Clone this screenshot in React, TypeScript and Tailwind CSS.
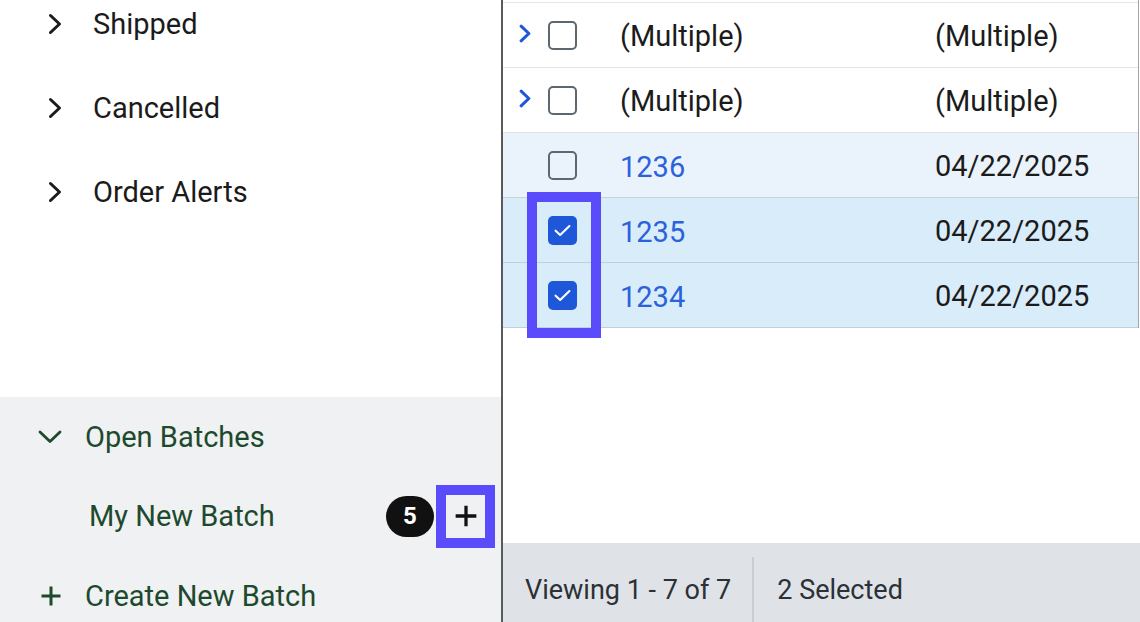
import React from "react";

type Row = {
  kind: "group" | "order";
  id: string;
  date: string;
  checked?: boolean;
  bg: string;
  line: string;
};

const rows: Row[] = [
  { kind: "group", id: "(Multiple)", date: "(Multiple)", bg: "bg-white", line: "border-[#e1e6eb]" },
  { kind: "group", id: "(Multiple)", date: "(Multiple)", bg: "bg-white", line: "border-[#dfe4e9]" },
  { kind: "order", id: "1236", date: "04/22/2025", bg: "bg-[#eaf3fb]", line: "border-[#c7d2db]" },
  { kind: "order", id: "1235", date: "04/22/2025", checked: true, bg: "bg-[#d8ecf9]", line: "border-[#c2ced8]" },
  { kind: "order", id: "1234", date: "04/22/2025", checked: true, bg: "bg-[#d8ecf9]", line: "border-[#c2ced8]" },
];

function ChevronRight({ className, width = 3 }: { className?: string; width?: number }) {
  return (
    <svg viewBox="0 0 14 22" className={className} fill="none">
      <path d="M2.5 2.5 L11.5 11 L2.5 19.5" stroke="currentColor" strokeWidth={width} strokeLinecap="round" strokeLinejoin="round" />
    </svg>
  );
}

function ChevronDown({ className }: { className?: string }) {
  return (
    <svg viewBox="0 0 24 14" className={className} fill="none">
      <path d="M2 2 L12 11.5 L22 2" stroke="currentColor" strokeWidth="2.8" strokeLinecap="round" strokeLinejoin="round" />
    </svg>
  );
}

function Plus({ className }: { className?: string }) {
  return (
    <svg viewBox="0 0 22 22" className={className} fill="none">
      <path d="M11 1.5 V20.5 M1.5 11 H20.5" stroke="currentColor" strokeWidth="3" />
    </svg>
  );
}

function Checkbox({ checked }: { checked?: boolean }) {
  if (checked) {
    return (
      <div className="w-[29px] h-[29px] rounded-[5px] bg-[#1f57d9] flex items-center justify-center">
        <svg viewBox="0 0 16 12" className="w-[17px] h-[13px]" fill="none">
          <path d="M1.5 6.2 L5.8 10.2 L14.5 1.8" stroke="white" strokeWidth="2" strokeLinecap="round" strokeLinejoin="round" />
        </svg>
      </div>
    );
  }
  return <div className="w-[29px] h-[29px] rounded-[5px] border-2 border-[#5d6770] bg-transparent" />;
}

export default function App() {
  return (
    <div
      className="w-[1140px] h-[622px] overflow-hidden flex bg-white text-[#1b1b1b]"
      style={{ fontFamily: "Roboto, 'Liberation Sans', sans-serif" }}
    >
      {/* sidebar */}
      <div className="w-[503px] shrink-0 flex flex-col border-r-2 border-[#5a5a5a]">
        <div className="flex-1 -mt-[18px]">
          {["Shipped", "Cancelled", "Order Alerts"].map((label) => (
            <div key={label} className="h-[84px] flex items-center">
              <ChevronRight className="w-[14px] h-[22px] ml-[48px] text-[#1b1b1b]" />
              <span className="ml-[31px] text-[29px] pt-[2px]">{label}</span>
            </div>
          ))}
        </div>

        <div className="h-[225px] bg-[#f0f1f3] text-[#1d4a2d]">
          <div className="h-[80px] flex items-center">
            <ChevronDown className="w-[24px] h-[14px] ml-[38px]" />
            <span className="ml-[23px] text-[29px] pt-[2px]">Open Batches</span>
          </div>
          <div className="h-[78px] flex items-center">
            <span className="ml-[89px] text-[29px] flex-1 pt-[2px]">My New Batch</span>
            <div className="w-[48px] h-[41px] rounded-full bg-[#111] text-white text-[24px] font-bold flex items-center justify-center">
              5
            </div>
            <div className="ml-[2px] mr-[6px] w-[59px] h-[63px] border-[10px] border-[#5b4cfb] flex items-center justify-center">
              <Plus className="w-[24px] h-[24px] text-[#111]" />
            </div>
          </div>
          <div className="h-[80px] flex items-center">
            <Plus className="w-[22px] h-[22px] ml-[40px] mt-[2px]" />
            <span className="ml-[23px] text-[29px] pt-[4px]">Create New Batch</span>
          </div>
        </div>
      </div>

      {/* table */}
      <div className="flex-1 flex flex-col">
        <div className="relative mr-[1px] border-r border-[#a3a3a3] pt-[2px]">
          <div className="border-t border-[#e1e6eb]" />
          {rows.map((r, i) => (
            <div key={i} className={`h-[65px] flex items-center border-b ${r.bg} ${r.line}`}>
              <div className="w-[45px] pl-[16px] flex">
                {r.kind === "group" && (
                  <ChevronRight width={3.6} className="w-[12px] h-[21px] text-[#1f57d9] -mt-[4px]" />
                )}
              </div>
              <div className="w-[72px]">
                <Checkbox checked={r.checked} />
              </div>
              {r.kind === "group" ? (
                <span className="w-[315px] text-[29px] pt-[3px]">{r.id}</span>
              ) : (
                <span className="w-[315px] text-[29px] text-[#2b62dc] pt-[6px]">{r.id}</span>
              )}
              <span className="text-[29px] pt-[3px]">{r.date}</span>
            </div>
          ))}
          <div className="absolute left-[24px] top-[192px] w-[74px] h-[146px] border-[10px] border-[#5b4cfb]" />
        </div>

        <div className="flex-1" />

        <div className="h-[79px] bg-[#dfe3e7] flex text-[27px] text-[#2b3136]">
          <div className="pl-[22px] pr-[21px] flex items-center pt-[16px]">Viewing 1 - 7 of 7</div>
          <div className="w-[2px] mt-[14px] bg-[#c6cdd4]" />
          <div className="pl-[23px] flex items-center pt-[16px]">2 Selected</div>
        </div>
      </div>
    </div>
  );
}
